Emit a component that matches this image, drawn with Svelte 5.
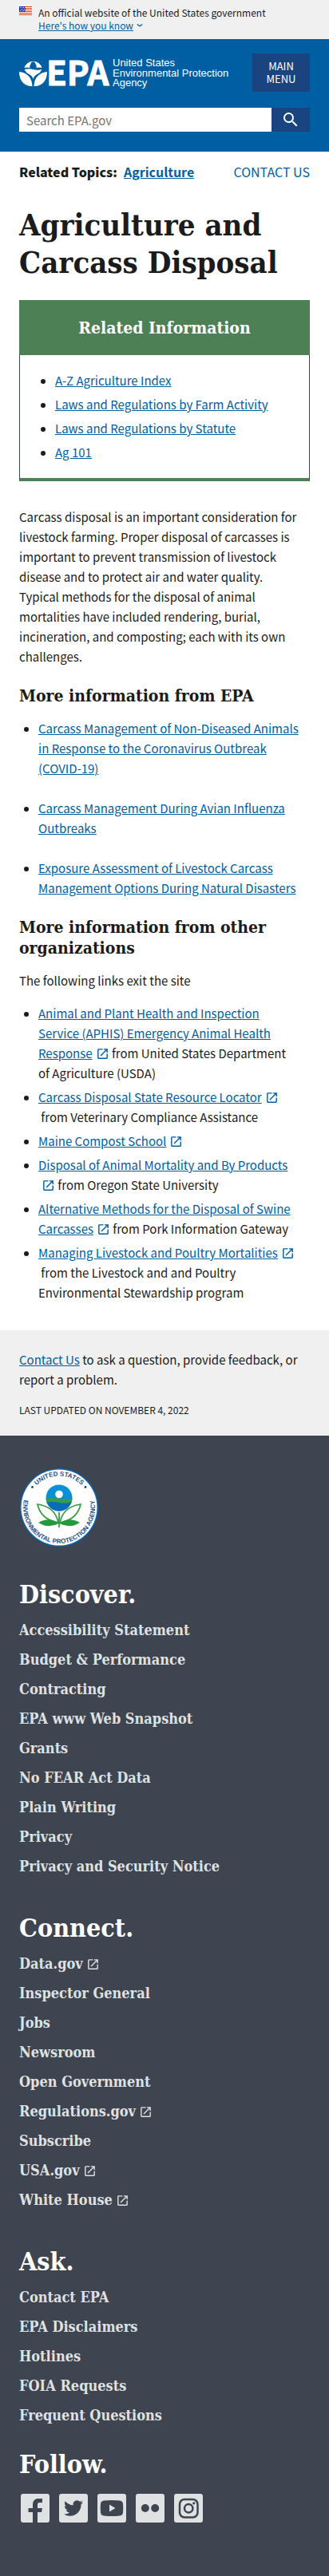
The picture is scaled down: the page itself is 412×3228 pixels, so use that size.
<script>
  const related = ['A-Z Agriculture Index', 'Laws and Regulations by Farm Activity', 'Laws and Regulations by Statute', 'Ag 101'];
  const epaLinks = [
    'Carcass Management of Non-Diseased Animals in Response to the Coronavirus Outbreak (COVID-19)',
    'Carcass Management During Avian Influenza Outbreaks',
    'Exposure Assessment of Livestock Carcass Management Options During Natural Disasters'
  ];
  const otherLinks = [
    { text: 'Animal and Plant Health and Inspection Service (APHIS) Emergency Animal Health Response', from: 'from United States Department of\u00a0Agriculture (USDA)' },
    { text: 'Carcass Disposal State Resource Locator', from: 'from Veterinary Compliance Assistance' },
    { text: 'Maine Compost School', from: '' },
    { text: 'Disposal of Animal Mortality and By Products', from: 'from Oregon State University' },
    { text: 'Alternative Methods for the Disposal of Swine Carcasses', from: 'from Pork Information Gateway' },
    { text: 'Managing Livestock and Poultry Mortalities', from: 'from the Livestock and and Poultry Environmental Stewardship program' }
  ];
  const footer = [
    {
      title: 'Discover.',
      links: ['Accessibility Statement', 'Budget & Performance', 'Contracting', 'EPA www Web Snapshot', 'Grants', 'No FEAR Act Data', 'Plain Writing', 'Privacy', 'Privacy and Security Notice']
    },
    {
      title: 'Connect.',
      links: ['Data.gov', 'Inspector General', 'Jobs', 'Newsroom', 'Open Government', 'Regulations.gov', 'Subscribe', 'USA.gov', 'White House']
    },
    { title: 'Ask.', links: ['Contact EPA', 'EPA Disclaimers', 'Hotlines', 'FOIA Requests', 'Frequent Questions'] }
  ];
  const external = ['Data.gov', 'Regulations.gov', 'USA.gov', 'White House'];
</script>

{#snippet launch()}
  <svg class="launch" viewBox="0 0 24 24" aria-hidden="true"><path fill="currentColor" d="M19 19H5V5h7V3H5a2 2 0 0 0-2 2v14a2 2 0 0 0 2 2h14c1.100 0 2-.9 2-2v-7h-2v7zM14 3v2h3.590l-9.830 9.830 1.410 1.410L19 6.410V10h2V3h-7z" /></svg>
{/snippet}

<div class="banner">
  <svg class="flag" viewBox="0 0 16 11" aria-hidden="true">
    <rect width="16" height="11" fill="#fff" />
    <path d="M0 .5h16M0 2.500h16M0 4.500h16M0 6.500h16M0 8.500h16M0 10.500h16" stroke="#db3e1f" />
    <rect width="8" height="7" fill="#1e33b1" />
    <path d="M1 1.500h7M2 3.500h6M1 5.500h7" stroke="#fff" stroke-dasharray="1 1" />
  </svg>
  <div>
    <p>An official website of the United States government</p>
    <button class="know"><span>Here's how you know</span>
      <svg viewBox="0 0 10 6" aria-hidden="true"><path d="M1 1l4 3 4-3" fill="none" stroke="currentColor" stroke-width="1.600" /></svg>
    </button>
  </div>
</div>

<header>
  <div class="brand">
    <a href="#home" class="logo" aria-label="Home">
      <svg viewBox="0 0 270 40">
        <g fill="#fff">
          <path d="M6.500 14a11.500 11.500 0 0 1 22 0q-4-1-7 0a4.300 4.300 0 1 0-8 0q-3-1-7 0z" />
          <circle cx="17.500" cy="9" r="2.800" fill="#005ea2" />
          <path d="M6.500 16q5.500-1.500 11 0t11 0a11.500 11.500 0 0 1-6 6q-4 2-5 6-1-4-5-6a11.500 11.500 0 0 1-6-6z" />
          <path d="M0 19c9 1 16 6 16.500 18C7 37.500 0 31 0 19zM35 19c-9 1-16 6-16.500 18C28 37.500 35 31 35 19z" />
          <text class="epa" x="34" y="36">EPA</text>
          <text class="agency" x="117" y="12">United States</text>
          <text class="agency" x="117" y="25">Environmental Protection</text>
          <text class="agency" x="117" y="37">Agency</text>
        </g>
      </svg>
    </a>
    <button class="menu">MAIN MENU</button>
  </div>
  <form class="search">
    <input type="search" aria-label="Search" placeholder="Search EPA.gov" />
    <button type="button" aria-label="Search">
      <svg viewBox="0 0 24 24" aria-hidden="true"><path fill="#fff" d="M15.500 14h-.79l-.28-.27A6.471 6.471 0 0 0 16 9.500 6.500 6.500 0 1 0 9.500 16c1.610 0 3.090-.59 4.230-1.570l.27.28v.79l5 4.990L20.490 19l-4.990-5zm-6 0C7.010 14 5 11.990 5 9.500S7.010 5 9.500 5 14 7.010 14 9.500 11.990 14 9.500 14z" /></svg>
    </button>
  </form>
</header>

<main>
  <div class="topics">
    <p><strong>Related Topics:</strong><a href="#agriculture">Agriculture</a></p>
    <a class="contact" href="#contact">CONTACT US</a>
  </div>
  <h1>Agriculture and Carcass Disposal</h1>
  <section class="box">
    <h2>Related Information</h2>
    <ul>
      {#each related as item}<li><a href="#related">{item}</a></li>{/each}
    </ul>
  </section>
  <p class="intro">Carcass disposal is an important consideration for livestock farming. Proper disposal of carcasses is important to prevent transmission of livestock disease and to protect air and water quality. Typical methods for the disposal of animal mortalities have included rendering, burial, incineration, and composting; each with its own challenges.</p>
  <h3>More information from EPA</h3>
  <ul class="spaced">
    {#each epaLinks as item}<li><a href="#epa">{item}</a></li>{/each}
  </ul>
  <h3>More information from other organizations</h3>
  <p class="note">The following links exit the site</p>
  <ul>
    {#each otherLinks as item}
      <li><a href="#external">{item.text}{@render launch()}</a>{#if item.from}<wbr />&nbsp;{item.from}{/if}</li>
    {/each}
  </ul>
</main>

<div class="feedback">
  <p><a href="#contact">Contact Us</a> to ask a question, provide feedback, or report a problem.</p>
  <p class="updated">LAST UPDATED ON NOVEMBER 4, 2022</p>
</div>

<footer>
  <svg class="seal" viewBox="0 0 100 100" role="img" aria-label="Agency seal">
    <defs>
      <path id="arc-top" d="M10.500 50a39.500 39.500 0 0 1 79 0" />
      <path id="arc-full" d="M20 16.500A45 45 0 1 0 80 16.500" />
      <clipPath id="globe"><circle cx="50" cy="38" r="16.500" /></clipPath>
    </defs>
    <circle cx="50" cy="50" r="49" fill="#0b65ad" />
    <circle cx="50" cy="50" r="47.500" fill="#fff" />
    <text text-anchor="middle"><textPath href="#arc-top" startOffset="50%">UNITED STATES</textPath></text>
    <text text-anchor="middle"><textPath href="#arc-full" startOffset="50%">ENVIRONMENTAL PROTECTION AGENCY</textPath></text>
    <circle cx="16.500" cy="24.500" r="1.400" fill="#173f75" />
    <circle cx="83" cy="24.500" r="1.400" fill="#173f75" />
    <g clip-path="url(#globe)">
      <rect x="33" y="21" width="34" height="34" fill="#0990d8" />
      <path d="M33 39q8-2 17 0t17-1v8H33z" fill="#3a9b4a" />
      <path d="M33 44q8-2 17 0t17-1v14H33z" fill="#086cba" />
    </g>
    <circle cx="50" cy="33.500" r="4.800" fill="#fff" />
    <path d="M49 69Q45 49 23 46q4 19 26 23zM51 69q4-20 26-23-4 19-26 23z" fill="#fff" stroke="#359d43" stroke-width="1.700" />
    <path d="M50 70q-12-9-26-1 12 8 26 1zM50 70q12-9 26-1-12 8-26 1z" fill="#229b3c" />
    <path d="M50 56v19" stroke="#229b3c" stroke-width="1.700" />
  </svg>
  {#each footer as group}
    <section>
      <h2>{group.title}</h2>
      <ul>
        {#each group.links as link}
          <li><a href="#footer">{link}{#if external.includes(link)}{@render launch()}{/if}</a></li>
        {/each}
      </ul>
    </section>
  {/each}
  <section class="follow">
    <h2>Follow.</h2>
    <div class="social">
      <a href="#facebook" aria-label="Facebook"><svg viewBox="0 0 36 36"><rect width="36" height="36" rx="3" /><path class="ink" d="M15 36V23H9.500v-5H15v-4.500C15 8.500 18 6 22 6h5v5h-3.500C21.500 11 21 12 21 13.500V18h6l-1 5h-5v13z" /></svg></a>
      <a href="#twitter" aria-label="Twitter"><svg viewBox="0 0 36 36"><rect width="36" height="36" rx="3" /><path class="ink" transform="translate(6 6)" d="M23.953 4.570a10 10 0 01-2.825.775 4.958 4.958 0 002.163-2.723c-.951.555-2.005.959-3.127 1.184a4.920 4.920 0 00-8.384 4.482C7.690 8.095 4.067 6.130 1.640 3.162a4.822 4.822 0 00-.666 2.475c0 1.710.87 3.213 2.188 4.096a4.904 4.904 0 01-2.228-.616v.06a4.923 4.923 0 003.946 4.827 4.996 4.996 0 01-2.212.085 4.936 4.936 0 004.604 3.417 9.867 9.867 0 01-6.102 2.105c-.39 0-.779-.023-1.170-.067a13.995 13.995 0 007.557 2.209c9.053 0 13.998-7.496 13.998-13.985 0-.21 0-.42-.015-.63A9.935 9.935 0 0024 4.590z" /></svg></a>
      <a href="#youtube" aria-label="YouTube"><svg viewBox="0 0 36 36"><rect width="36" height="36" rx="3" /><path class="ink" d="M8 8.500q10-1 20 0 3.500.5 4 4 .5 5.500 0 11-.5 3.500-4 4-10 1-20 0-3.500-.5-4-4-.5-5.500 0-11 .5-3.500 4-4z" /><path d="M15 13.500v9l7.500-4.500z" /></svg></a>
      <a href="#flickr" aria-label="Flickr"><svg viewBox="0 0 36 36"><rect width="36" height="36" rx="3" /><circle class="ink" cx="11.800" cy="18" r="5" /><circle class="ink" cx="24.200" cy="18" r="5" /></svg></a>
      <a href="#instagram" aria-label="Instagram"><svg viewBox="0 0 36 36"><rect width="36" height="36" rx="3" /><g class="line"><rect x="7" y="7" width="22.500" height="22.500" rx="6" /><circle cx="18.200" cy="18.200" r="5.200" /></g><circle class="ink" cx="24.800" cy="11.800" r="1.600" /></svg></a>
    </div>
  </section>
</footer>

<style>
  :global(body) {
    background: #fff;
    color: #1b1b1b;
    font: 15px/25px 'Noto Sans CJK SC', 'Open Sans', sans-serif;
  }
  p, h1, h2, h3, ul { margin: 0; padding: 0; }
  a { color: #005ea2; }
  button { border: 0; font: inherit; cursor: pointer; }
  h1, h2, h3, footer { font-family: 'DejaVu Serif Condensed', 'DejaVu Serif', serif; font-weight: 700; }

  .banner { display: flex; gap: 8px; padding: 8px 24px 9px; background: #f0f0f0; font-size: 12px; line-height: 16px; }
  .flag { width: 16px; height: 11px; flex: none; }
  .know { display: flex; align-items: center; gap: 4px; padding: 0; background: none; color: #005ea2; }
  .know span { text-decoration: underline; }
  .know svg { width: 8px; height: 6px; }

  header { padding: 18px 24px 25px; background: #005ea2; }
  .brand { display: flex; justify-content: space-between; align-items: center; }
  .logo svg { display: block; width: 270px; height: 40px; overflow: visible; }
  .epa { font: 700 42px 'Noto Sans CJK SC', sans-serif; stroke: #fff; stroke-width: 1px; }
  .agency { font: 13px 'Liberation Sans', sans-serif; }
  .menu { width: 72px; padding: 8px 12px; background: #1a4480; color: #fff; font-size: 13px; line-height: 16px; }
  .search { display: flex; margin-top: 20px; }
  .search input { flex: 1; min-width: 0; height: 30px; box-sizing: border-box; padding: 0 9px; border: 0; border-radius: 0; background: #fff; color: #1b1b1b; font: inherit; appearance: none; }
  .search input::placeholder { color: #757575; opacity: 1; }
  .search button { width: 48px; height: 30px; padding: 0; background: #1a4480; }
  .search svg { display: block; width: 24px; height: 24px; margin: auto; }

  main { padding: 13px 24px 35px; }
  .topics { display: flex; justify-content: space-between; align-items: center; font-size: 16px; }
  .topics p { display: flex; gap: 8px; font-weight: 700; }
  .contact { text-decoration: none; }
  h1 { margin: 30px 0 24px; font-size: 38px; line-height: 47px; }
  .box { margin-bottom: 32px; border: 1px solid #3d4551; border-top: 0; border-bottom: 4px solid #4d8055; }
  .box h2 { margin: 0 -1px; padding: 22px 12px; background: #4d8055; color: #fff; font-size: 21px; line-height: 25px; text-align: center; }
  .intro { padding-right: 12px; }
  main ul { padding: 0 12px 0 24px; }
  .box ul { padding: 19px 16px 20px 44px; }
  li + li { margin-top: 5px; }
  .spaced li + li { margin-top: 25px; }
  h3 { margin: 24px 0 15px; font-size: 21px; line-height: 26px; }
  .note { margin-bottom: 16px; }
  .launch { display: inline-block; width: 17px; height: 17px; margin-left: 4px; vertical-align: -3px; }

  .feedback { padding: 24px 24px 22px; background: #f0f0f0; }
  .updated { margin-top: 16px; font-size: 12px; line-height: 20px; }

  footer { padding: 40px 24px 67px; background: #3e4450; font-size: 18px; line-height: 37px; }
  .seal { display: block; width: 100px; height: 100px; }
  .seal text { font: 700 8px 'Liberation Sans', sans-serif; fill: #1f4f86; }
  footer section { margin-top: 41px; }
  footer h2 { color: #fff; font-size: 32px; line-height: 36px; }
  footer ul { margin-top: 8px; list-style: none; }
  footer li + li { margin-top: 0; }
  footer a { color: #dfe1e2; text-decoration: none; }
  footer .follow { margin-top: 25px; }
  .social { display: flex; gap: 12px; margin-top: 19px; padding-left: 2px; }
  .social svg { display: block; width: 36px; height: 36px; fill: #dfe1e2; }
  .social .ink { fill: #3e4450; }
  .social .line { fill: none; stroke: #3e4450; stroke-width: 2.5px; }
</style>
